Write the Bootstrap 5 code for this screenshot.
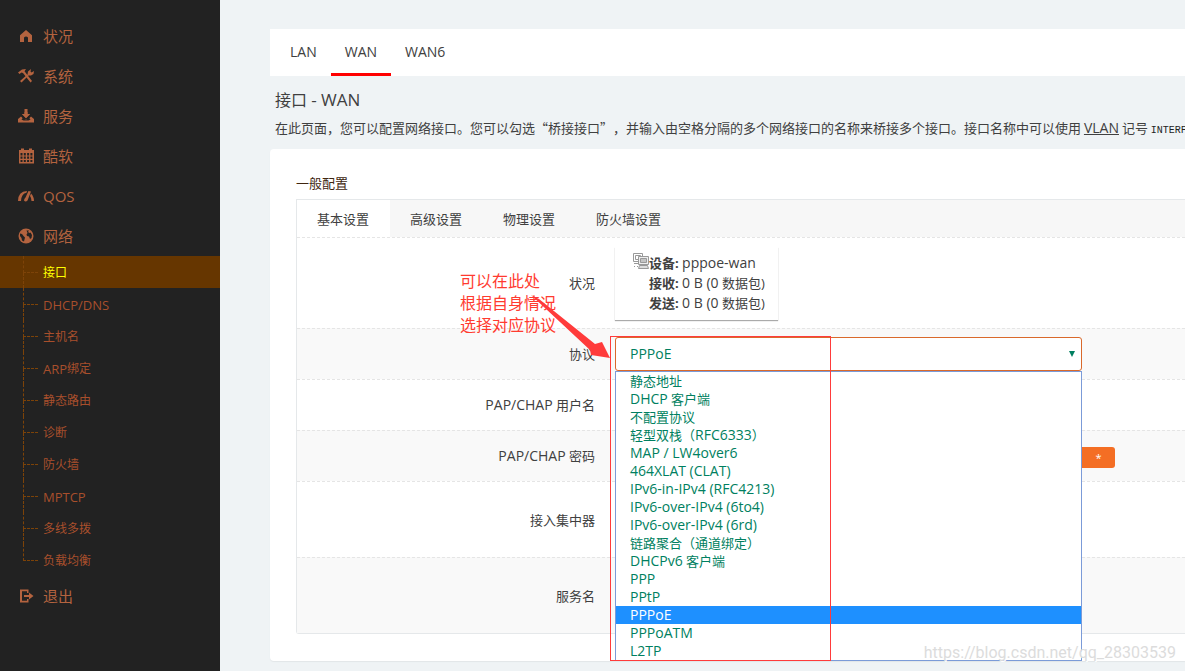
<!DOCTYPE html>
<html lang="zh-CN">
<head>
<meta charset="utf-8">
<meta name="viewport" content="width=device-width, initial-scale=1">
<title>接口 - WAN</title>
<link href="https://cdn.jsdelivr.net/npm/bootstrap@5.3.0/dist/css/bootstrap.min.css" rel="stylesheet">
<style>
  body { background: #eff3f5; color: #404040; font: 13px/20px "Open Sans", "Noto Sans CJK SC", sans-serif; overflow-x: hidden; text-spacing-trim: space-all; }
  .latin { font-size: 14px; }

  /* sidebar */
  .sidebar { flex: 0 0 220px; background: #222; padding-top: 16px; }
  .sidebar a { text-decoration: none; color: #b4633f; }
  .menu-item { height: 40px; padding-left: 18px; gap: 9px; font-size: 15px; }
  .menu-item svg { width: 16px; height: 16px; fill: currentColor; flex: none; }
  .submenu a { height: 32px; padding: 1px 0 0 43px; font-size: 12px; color: #a84f2c; }
  .submenu .latin { font-size: 13px; }
  .submenu li { position: relative; }
  .submenu li::before { content: ""; position: absolute; left: 23px; top: 0; width: 15px; height: 17px; border-left: 1px dashed #7d4308; border-bottom: 1px dashed #7d4308; }
  .submenu li:not(:last-child)::after { content: ""; position: absolute; left: 23px; top: 17px; height: 15px; border-left: 1px dashed #7d4308; }
  .submenu a.current { background: #663600; color: #ff0; }

  /* content */
  .content-area { padding: 29px 0 10px 50px; min-width: 0; }
  .iface-tabs { background: #fff; height: 47px; padding-left: 6px; font-size: 14px; }
  .iface-tabs a { padding: 1px 14px 0; color: #404040; text-decoration: none; border-bottom: 3px solid transparent; }
  .iface-tabs a.current { border-color: #f00; }
  .page-title { font-size: 16px; line-height: 20px; margin: 14px 0 0 5px; }
  .page-title .latin { font-size: 17px; }
  .page-desc { margin: 8px 0 8px 5px; font-family: "Noto Sans CJK SC", sans-serif; }
  .page-desc a { font-family: "Open Sans", sans-serif; color: #404040; }
  .page-desc code { font: 10px/20px "Liberation Mono", monospace; color: #222; }
  .panel { background: #fff; border-radius: 4px 0 0 4px; padding: 24px 0 27px 26px; box-shadow: 0 1px 1px #e2e6e8; }
  .panel h3 { font-size: 13px; line-height: 20px; margin: 0 0 6px; color: #40260f; }
  .panel-box { border: 1px solid #e5e8ea; border-right: 0; border-radius: 0 0 0 3px; }
  .form-tabs { background: #f7f7f7; height: 37px; }
  .form-tabs a { padding: 0 21px 0 20px; color: #404040; text-decoration: none; font-size: 13px; }
  .form-tabs a.current { background: #fff; }
  .form-line { border-top: 1px dashed #e5e5e5; gap: 20px; min-height: 51px; }
  .form-line:nth-child(odd) { background: #f9f9f9; }
  .form-line.tall { min-height: 76px; }
  .form-line.status-line { min-height: 91px; }
  .form-line > label, .form-line > .caption { flex: 0 0 298px; text-align: right; }
  .field { width: 467px; height: 34px; border: 1px solid #ccc; border-radius: 3px; padding: 0 14px; font-size: 14px; color: #007f60; background-color: #fff; }
  .form-select.field { border-color: #d9692b; padding-bottom: 2px; background-image: url("data:image/svg+xml,%3Csvg xmlns='http://www.w3.org/2000/svg' viewBox='0 0 6 6'%3E%3Cpath fill='%23007f60' d='M0 0h6L3 6z'/%3E%3C/svg%3E"); background-size: 6px 6px; background-position: right 6px center; }
  .status-box { height: 73px; padding: 6px 13px 7px 18px; box-shadow: 0 1px 1px #aaa; background: #fff; }
  .status-box svg { width: 16px; height: 16px; flex: none; }
  .reveal-btn { background: #f46e24; color: #fff; border: 0; border-radius: 0 3px 3px 0; width: 33px; height: 21px; font-size: 11px; line-height: 21px; padding: 0; margin-top: 2px; }

  /* opened protocol list */
  .proto-list { position: absolute; top: 34px; left: 0; width: 467px; border: 1px solid #7b9bd8; background: #fff; z-index: 2; color: #007f60; }
  .proto-list li { line-height: 18px; height: 18px; padding-left: 14px; }
  .proto-list li.chosen { background: #1e90ff; color: #fff; }

  /* annotations */
  .note-frame { position: absolute; left: -5px; top: -1px; width: 221px; height: 325px; border: 1px solid #ff3b3b; z-index: 3; pointer-events: none; }
  .note-text { position: absolute; left: -155px; top: -67px; width: 100px; font-size: 16px; line-height: 22px; color: #ff3b30; z-index: 3; }
  .note-arrow { position: absolute; left: -84px; top: -42px; width: 81px; height: 64px; z-index: 3; }
  .watermark { position: absolute; right: 9px; top: 641px; font: 16px/24px Roboto, sans-serif; color: #dcdcdc; text-shadow: 1px 1px 0 #fff; z-index: 4; pointer-events: none; }
</style>
</head>
<body>
<div class="d-flex min-vh-100 position-relative overflow-hidden">
  <nav class="sidebar" aria-label="主菜单">
    <a href="#" class="menu-item d-flex align-items-center">
      <svg viewBox="0 0 16 16"><path d="M8 2 14 7.200V14H10V9.500Q8 7.500 6 9.500V14H2V7.200z"/></svg>状况</a>
    <a href="#" class="menu-item d-flex align-items-center">
      <svg viewBox="0 0 16 16"><path d="M0 4.500 4 1.500 8 1 6.500 3.200 14 13 12.500 14.500 5 5 3.500 4.500 1.500 6z"/><path d="M2 13 9.500 6.500 10 3.500 13 1 12.500 3.500 13.500 4.500 16 3 15.500 6 13 7.500H10.500L3.500 14.500z"/></svg>系统</a>
    <a href="#" class="menu-item d-flex align-items-center">
      <svg viewBox="0 0 16 16"><path d="M6.500 1h3v5H12L8 10 4 6h2.500zM3 8.500 5.500 11h5L13 8.500l3 2.500v3.500H0V11z"/><path fill="#222" d="M3.500 11.500l2 1h5l2-1-1.500-1.800L9 11.200H7L5 9.700z"/><path d="M6.500 4h3v2H12L8 10.300 4 6h2.500z"/></svg>服务</a>
    <a href="#" class="menu-item d-flex align-items-center">
      <svg viewBox="0 0 16 16"><path fill-rule="evenodd" d="M1 2h2V.5h3V2h5V.5h3V2h2v13.500H1zM2.500 5v2.500h2V5zm3.300 0v2.500h2V5zm3.300 0v2.500h2V5zm3.300 0v2.500h2V5zM2.500 8.500v2.200h2V8.500zm3.300 0v2.200h2V8.500zm3.300 0v2.200h2V8.500zm3.300 0v2.200h2V8.500zM2.500 12v2h2v-2zm3.300 0v2h2v-2zm3.300 0v2h2v-2zm3.300 0v2h2v-2z"/></svg>酷软</a>
    <a href="#" class="menu-item d-flex align-items-center">
      <svg viewBox="0 0 16 16"><path d="M0 13Q0 3.500 9 3L8.500 4.800Q3.500 5.500 3 13zM10.500 3 13 3.500 9.500 12.500Q7.500 14.500 6 12.500 6 11 7.500 9.500zM13 5.500Q16 8.500 16 13H13.500Q13.500 10 12 8z"/></svg><span>QOS</span></a>
    <a href="#" class="menu-item d-flex align-items-center">
      <svg viewBox="0 0 16 16"><circle cx="8" cy="8" r="7.500"/><path fill="#222" d="M2 5.500 4 6 5.500 8 7 9.500 6.500 11.500 6 13.500 4 12.500 3.500 10 2 8zM8.500 2.500 11 2.500 10 4 11.500 5 12.500 4.500 14 7 13.500 10 12 11 11 8.500 9 8 8.500 6.500 9.500 5z"/></svg>网络</a>
    <ul class="submenu list-unstyled m-0">
      <li><a href="#" class="current d-flex align-items-center" aria-current="page">接口</a></li>
      <li><a href="#" class="d-flex align-items-center"><span class="latin">DHCP/DNS</span></a></li>
      <li><a href="#" class="d-flex align-items-center">主机名</a></li>
      <li><a href="#" class="d-flex align-items-center"><span class="latin">ARP</span>绑定</a></li>
      <li><a href="#" class="d-flex align-items-center">静态路由</a></li>
      <li><a href="#" class="d-flex align-items-center">诊断</a></li>
      <li><a href="#" class="d-flex align-items-center">防火墙</a></li>
      <li><a href="#" class="d-flex align-items-center"><span class="latin">MPTCP</span></a></li>
      <li><a href="#" class="d-flex align-items-center">多线多拨</a></li>
      <li><a href="#" class="d-flex align-items-center">负载均衡</a></li>
    </ul>
    <a href="#" class="menu-item d-flex align-items-center">
      <svg viewBox="0 0 16 16"><path d="M2 1.500h8.500V5H9V3.200H4v9.600h5V11h1.500v3.500H2zM6 7h5V4.500L15.500 8 11 11.500V9H6z"/></svg>退出</a>
  </nav>

  <main class="content-area flex-grow-1">
    <nav class="iface-tabs d-flex" aria-label="接口">
      <a href="#" class="d-flex align-items-center">LAN</a>
      <a href="#" class="d-flex align-items-center current">WAN</a>
      <a href="#" class="d-flex align-items-center">WAN6</a>
    </nav>
    <h2 class="page-title fw-normal">接口 <span class="latin">- WAN</span></h2>
    <p class="page-desc text-nowrap">在此页面，您可以配置网络接口。您可以勾选“桥接接口”，并输入由空格分隔的多个网络接口的名称来桥接多个接口。接口名称中可以使用 <a href="#" class="latin">VLAN</a> 记号 <code>INTERFACE.VLANNR</code></p>

    <section class="panel">
      <h3 class="fw-normal">一般配置</h3>
      <form class="panel-box">
        <nav class="form-tabs d-flex" aria-label="设置">
          <a href="#" class="current d-flex align-items-center">基本设置</a>
          <a href="#" class="d-flex align-items-center">高级设置</a>
          <a href="#" class="d-flex align-items-center">物理设置</a>
          <a href="#" class="d-flex align-items-center">防火墙设置</a>
        </nav>
        <div class="form-line status-line d-flex align-items-center">
          <span class="caption">状况</span>
          <div class="status-box d-flex">
            <svg viewBox="0 0 16 16" fill="none" stroke="#999"><path d="M.5.500h9v8h-9zM2.500 2.500h5v4h-5z"/><path d="M1 10.500h4M1 13.500h1m2 0h1" /><path fill="#eee" d="M5.500 3.500h10v8h-10z"/><path fill="#c4c4c4" d="M7.500 5.500h6v4h-6z"/><path fill="#ddd" d="M6.500 12.500h8l1 3h-10z"/></svg>
            <div><b>设备:</b> <span class="latin">pppoe-wan</span><br><b>接收:</b> <span class="latin">0 B (0</span> 数据包)<br><b>发送:</b> <span class="latin">0 B (0</span> 数据包)</div>
          </div>
        </div>
        <div class="form-line d-flex align-items-center">
          <label for="proto">协议</label>
          <div class="position-relative">
            <select id="proto" class="form-select field"><option>PPPoE</option></select>
            <ul class="proto-list list-unstyled m-0" role="listbox" aria-label="协议">
              <li role="option">静态地址</li>
              <li role="option"><span class="latin">DHCP</span> 客户端</li>
              <li role="option">不配置协议</li>
              <li role="option">轻型双栈（<span class="latin">RFC6333</span>）</li>
              <li role="option"><span class="latin">MAP / LW4over6</span></li>
              <li role="option"><span class="latin">464XLAT (CLAT)</span></li>
              <li role="option"><span class="latin">IPv6-in-IPv4 (RFC4213)</span></li>
              <li role="option"><span class="latin">IPv6-over-IPv4 (6to4)</span></li>
              <li role="option"><span class="latin">IPv6-over-IPv4 (6rd)</span></li>
              <li role="option">链路聚合（通道绑定）</li>
              <li role="option"><span class="latin">DHCPv6</span> 客户端</li>
              <li role="option"><span class="latin">PPP</span></li>
              <li role="option"><span class="latin">PPtP</span></li>
              <li role="option" class="chosen" aria-selected="true"><span class="latin">PPPoE</span></li>
              <li role="option"><span class="latin">PPPoATM</span></li>
              <li role="option"><span class="latin">L2TP</span></li>
            </ul>
            <div class="note-frame"></div>
            <div class="note-text">可以在此处<br>根据自身情况<br>选择对应协议</div>
            <svg class="note-arrow" viewBox="0 0 81 64" fill="#ff3b3b"><path d="M0 0 8 4 64 49 71 47 79 63 60 60 59 55Z"/></svg>
          </div>
        </div>
        <div class="form-line d-flex align-items-center">
          <label for="user"><span class="latin">PAP/CHAP</span> 用户名</label>
          <input id="user" type="text" class="field">
        </div>
        <div class="form-line d-flex align-items-center">
          <label for="pass"><span class="latin">PAP/CHAP</span> 密码</label>
          <div class="d-flex align-items-center">
            <input id="pass" type="password" class="field">
            <button type="button" class="reveal-btn">*</button>
          </div>
        </div>
        <div class="form-line tall d-flex align-items-center">
          <label for="ac">接入集中器</label>
          <input id="ac" type="text" class="field">
        </div>
        <div class="form-line tall d-flex align-items-center">
          <label for="service">服务名</label>
          <input id="service" type="text" class="field">
        </div>
      </form>
    </section>
  </main>
  <div class="watermark">https://blog.csdn.net/qq_28303539</div>
</div>
<script src="https://cdn.jsdelivr.net/npm/bootstrap@5.3.0/dist/js/bootstrap.bundle.min.js"></script>
</body>
</html>
